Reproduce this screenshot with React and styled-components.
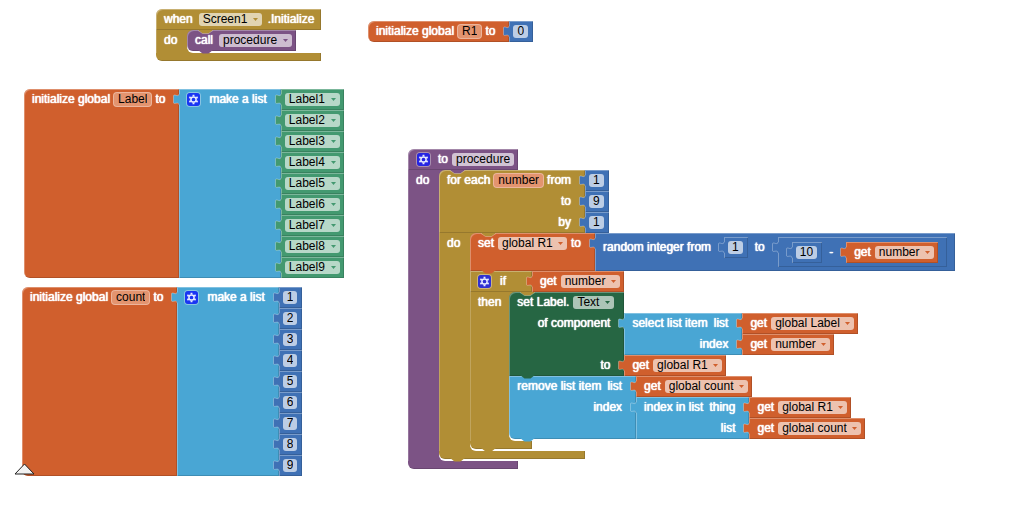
import React from 'react'
import styled, { createGlobalStyle } from 'styled-components'

const colors = {
  variable: '#d05f2d',
  list: '#49a6d4',
  math: '#3f71b5',
  component: '#439970',
  setter: '#266643',
  procedure: '#7c5385',
  control: '#b18e35',
}

const GlobalStyle = createGlobalStyle`
  body {
    margin: 0;
    background: white;
    font-family: 'Liberation Sans', Arial, sans-serif;
    font-size: 12px;
  }
`

const Workspace = styled.main`
  position: relative;
  min-height: 100vh;
  overflow: hidden;
`

const Placed = styled.div`
  position: absolute;
  left: ${props => props.$x}px;
  top: ${props => props.$y}px;
`

const Grid = styled.div`
  position: relative;
  display: grid;
  grid-template-columns: auto auto;
  justify-content: start;
  justify-items: start;
`

const Body = styled.div`
  grid-column: 1;
  grid-row: 1 / span ${props => props.$rows};
  justify-self: stretch;
  background: ${props => props.$color};
  border-radius: ${props => props.$radius || '0'};
  box-shadow: inset 1px 1px 0 rgba(255, 255, 255, .3), inset -1px -1px 0 rgba(0, 0, 0, .15);
`

const Fields = styled.div`
  grid-column: 1;
  grid-row: ${props => props.$row};
  justify-self: ${props => props.$row === 1 ? 'start' : 'end'};
  display: flex;
  align-items: flex-start;
  min-height: 21px;
  gap: ${props => props.$gap}px;
  padding: ${props => props.$top}px ${props => props.$end}px ${props => props.$bottom}px ${props => props.$start}px;
`

const Value = styled.div`
  grid-column: 2;
  grid-row: ${props => props.$row};
`

const Inline = styled.div`
  margin-left: ${props => props.$space}px;
  outline: 1px solid rgba(255, 255, 255, .25);
  outline-offset: -1px;
`

const Text = styled.span`
  line-height: 21px;
  color: white;
  text-shadow: 0 0 1px white, 0 0 1px white;
  white-space: nowrap;
`

const Chip = styled.label`
  display: flex;
  align-items: center;
  gap: 5px;
  height: 13px;
  margin-top: 4px;
  padding: 0 4px;
  border-radius: 3px;
  background: rgba(255, 255, 255, .62);
`

const Select = styled.select`
  appearance: none;
  height: 13px;
  margin: 0;
  padding: 0;
  border: 0;
  background: transparent;
  color: black;
  font: inherit;
  line-height: 13px;
`

const Input = styled.input`
  field-sizing: content;
  box-sizing: border-box;
  height: 13px;
  margin: 4px 0 0;
  padding: 0 4px;
  border: 0;
  border-radius: 3px;
  background: ${props => props.$name ? '#e3946f' : 'rgba(255, 255, 255, .65)'};
  box-shadow: ${props => props.$name ? '0 0 0 1px #ecb59c' : 'none'};
  color: black;
  font: inherit;
  line-height: 13px;
`

const GearButton = styled.button`
  display: flex;
  width: 13px;
  height: 13px;
  margin: 4px 4px 0 0;
  padding: 0;
  border: 0;
  border-radius: 3px;
  background: rgba(15, 25, 250, .8);
  box-shadow: 0 0 0 1px rgba(255, 255, 255, .35);
`

const TabShape = styled.svg`
  position: absolute;
  z-index: 1;
  left: -6px;
  top: 5px;
`

const NotchShape = styled.svg`
  position: absolute;
  z-index: 2;
  left: 11px;
  ${props => props.$bottom ? 'bottom: -3px;' : 'top: 0;'}
`

const Statement = styled.div`
  position: relative;
`

const Arm = styled.div`
  box-sizing: border-box;
  min-width: 31px;
  padding: 0 8px;
  background: ${props => props.$color};
  box-shadow: inset 1px 0 0 rgba(255, 255, 255, .2);
`

const SlotEdge = styled.div`
  background: linear-gradient(${props => props.$color}, ${props => props.$color}) 0 0 / 8px 100% no-repeat;
`

const Slot = styled.div`
  position: relative;
  padding-bottom: 2px;
  background: linear-gradient(${props => props.$color}, ${props => props.$color}) 0 0 / 8px 8px no-repeat white;
  border-radius: 0 0 0 6px;
`

// the mouth takes no part in sizing the head column
const Mouth = styled.div`
  grid-column: 1;
  grid-row: ${props => props.$row};
  display: flex;
  width: 0;

  > * {
    flex: none;
  }
`

// keeps the lower bar as wide as the block's own head
const Foot = styled.div`
  grid-column: 1;
  grid-row: ${props => props.$row};
  justify-self: stretch;
  height: 8px;
  background: ${props => props.$color};
  border-radius: 0 0 0 6px;
  box-shadow: inset -1px -1px 0 rgba(0, 0, 0, .15);
`

const Gear = () => (
  <GearButton type="button" aria-label="Edit block">
    <svg width="13" height="13" viewBox="0 0 13 13" fill="none" stroke="#e4e9ff">
      <circle cx="6.5" cy="6.5" r="2.6" strokeWidth="1.5" />
      <path
        d="M6.5 1.7v1.8M6.5 9.5v1.8M2.3 4.1l1.6.9M9.1 8l1.6.9M2.3 8.9l1.6-.9M9.1 5l1.6-.9"
        strokeWidth="1.9"
      />
    </svg>
  </GearButton>
)

const Tab = ({ color }) => (
  <TabShape width="7" height="12" viewBox="0 0 7 12">
    <path d="M7 0H6C6 4 .5 -1 .5 2V8.500C.5 11 6 7 6 11H7Z" fill={color} />
    <path
      d="M6 0C6 4 .5 -1 .5 2V8.500C.5 11 6 7 6 11"
      fill="none"
      stroke="white"
      strokeOpacity=".3"
    />
  </TabShape>
)

const Notch = ({ color, bottom }) => (
  <NotchShape $bottom={bottom} width="15" height="4" viewBox="0 0 15 4">
    <path d="M0 0H15L10.500 3.500H4.500Z" fill={color} />
    {!bottom && <path d="M0 .5L4.500 3.500H10.500L15 .5" fill="none" stroke="white" strokeOpacity=".3" />}
  </NotchShape>
)

const Dropdown = ({ value, color }) => (
  <Chip>
    <Select aria-label={value} defaultValue={value}>
      <option>{value}</option>
    </Select>
    <svg width="5" height="3" viewBox="0 0 5 3"><path d="M0 0h5L2.500 3z" fill={color} /></svg>
  </Chip>
)

const Name = ({ value }) => <Input $name aria-label="Name" defaultValue={value} />

const Rows = ({ rows }) => rows.map((row, i) => (
  <React.Fragment key={i}>
    <Fields
      $row={i + 1}
      $gap={row.gap || 4}
      $start={row.start || 8}
      $end={row.end || 14}
      $top={row.top || 0}
      $bottom={row.bottom || 0}
    >
      {row.fields}
    </Fields>
    {row.value && <Value $row={i + 1}>{row.value}</Value>}
  </React.Fragment>
))

const Block = ({ color, rows, tab, radius }) => (
  <Grid>
    <Body $color={color} $rows={rows.length} $radius={radius} />
    <Rows rows={rows} />
    {tab && <Tab color={color} />}
  </Grid>
)

const Container = ({ color, rows, label, outer, square, children }) => (
  <Grid>
    <Body $color={color} $rows={rows.length} $radius={square ? '0' : '6px 0 0 0'} />
    <Rows rows={rows} />
    <Mouth $row={rows.length + 1}>
      <Arm $color={color}><Text>{label}</Text></Arm>
      <SlotEdge $color={color}>
        <Slot $color={color}>
          {React.Children.map(children, child => <Statement>{child}</Statement>)}
          <Notch color={color} />
        </Slot>
      </SlotEdge>
    </Mouth>
    <Foot $row={rows.length + 2} $color={color} />
    {!outer && <Notch bottom color={color} />}
  </Grid>
)

const Num = ({ value }) => (
  <Block
    tab
    color={colors.math}
    rows={[{ start: 4, end: 5, fields: <Input aria-label="Number" defaultValue={value} /> }]}
  />
)

const Get = ({ name }) => (
  <Block
    tab
    color={colors.variable}
    rows={[{
      end: 4,
      fields: <><Text>get</Text><Dropdown value={name} color={colors.variable} /></>,
    }]}
  />
)

const ComponentRef = ({ name }) => (
  <Block
    tab
    color={colors.component}
    rows={[{ start: 4, end: 4, fields: <Dropdown value={name} color={colors.component} /> }]}
  />
)

const MakeList = ({ items }) => (
  <Block
    tab
    color={colors.list}
    rows={items.map((item, i) => ({
      gap: 5,
      fields: i === 0 && <><Gear /><Text>make a list</Text></>,
      value: item,
    }))}
  />
)

const Global = ({ name, value }) => (
  <Block
    color={colors.variable}
    radius="6px 0 0 6px"
    rows={[{
      fields: <><Text>initialize global</Text><Name value={name} /><Text>to</Text></>,
      value,
    }]}
  />
)

const Screen = () => (
  <Container
    outer
    color={colors.control}
    label="do"
    rows={[{
      gap: 6,
      end: 7,
      fields: <><Text>when</Text><Dropdown value="Screen1" color={colors.control} /><Text>.Initialize</Text></>,
    }]}
  >
    <>
      <Block
        color={colors.procedure}
        radius="6px 0 0 6px"
        rows={[{
          gap: 6,
          end: 4,
          fields: <><Text>call</Text><Dropdown value="procedure" color={colors.procedure} /></>,
        }]}
      />
      <Notch bottom color={colors.procedure} />
    </>
  </Container>
)

const RandomInteger = () => (
  <Block
    tab
    color={colors.math}
    rows={[{
      top: 4,
      bottom: 4,
      end: 8,
      gap: 7,
      fields: <>
        <Text>random integer from</Text>
        <Inline $space={6}><Num value="1" /></Inline>
        <Text>to</Text>
        <Inline $space={6}>
          <Block
            tab
            color={colors.math}
            rows={[{
              start: 14,
              end: 9,
              top: 5,
              bottom: 4,
              gap: 7,
              fields: <>
                <Inline $space={0}><Num value="10" /></Inline>
                <Text>-</Text>
                <Inline $space={6}><Get name="number" /></Inline>
              </>,
            }]}
          />
        </Inline>
      </>,
    }]}
  />
)

const SetRandom = () => (
  <>
    <Block
      color={colors.variable}
      radius="6px 0 0 0"
      rows={[{
        fields: <><Text>set</Text><Dropdown value="global R1" color={colors.variable} /><Text>to</Text></>,
        value: <RandomInteger />,
      }]}
    />
    <Notch bottom color={colors.variable} />
  </>
)

const SetText = () => (
  <>
    <Block
      color={colors.setter}
      radius="6px 0 0 0"
      rows={[
        {
          end: 10,
          fields: <><Text>set Label.</Text><Dropdown value="Text" color={colors.setter} /></>,
        },
        {
          fields: <Text>of component</Text>,
          value: (
            <Block
              tab
              color={colors.list}
              rows={[
                { gap: 6, fields: <><Text>select list item</Text><Text>list</Text></>, value: <Get name="global Label" /> },
                { fields: <Text>index</Text>, value: <Get name="number" /> },
              ]}
            />
          ),
        },
        { fields: <Text>to</Text>, value: <Get name="global R1" /> },
      ]}
    />
    <Notch bottom color={colors.setter} />
  </>
)

const RemoveItem = () => (
  <>
    <Block
      color={colors.list}
      radius="0 0 0 6px"
      rows={[
        { gap: 6, fields: <><Text>remove list item</Text><Text>list</Text></>, value: <Get name="global count" /> },
        {
          fields: <Text>index</Text>,
          value: (
            <Block
              tab
              color={colors.list}
              rows={[
                { gap: 6, fields: <><Text>index in list</Text><Text>thing</Text></>, value: <Get name="global R1" /> },
                { fields: <Text>list</Text>, value: <Get name="global count" /> },
              ]}
            />
          ),
        },
      ]}
    />
    <Notch bottom color={colors.list} />
  </>
)

const Procedure = () => (
  <Container
    outer
    color={colors.procedure}
    label="do"
    rows={[{
      start: 9,
      end: 4,
      fields: <><Gear /><Text>to</Text><Input aria-label="Procedure name" defaultValue="procedure" /></>,
    }]}
  >
    <Container
      color={colors.control}
      label="do"
      rows={[
        {
          fields: <><Text>for each</Text><Name value="number" /><Text>from</Text></>,
          value: <Num value="1" />,
        },
        { fields: <Text>to</Text>, value: <Num value="9" /> },
        { fields: <Text>by</Text>, value: <Num value="1" /> },
      ]}
    >
      <SetRandom />
      <Container
        square
        color={colors.control}
        label="then"
        rows={[{
          gap: 5,
          end: 26,
          fields: <><Gear /><Text>if</Text></>,
          value: <Get name="number" />,
        }]}
      >
        <SetText />
        <RemoveItem />
      </Container>
    </Container>
  </Container>
)

const numbers = [1, 2, 3, 4, 5, 6, 7, 8, 9]

const App = () => (
  <Workspace>
    <GlobalStyle />
    <Placed $x={156} $y={9}><Screen /></Placed>
    <Placed $x={368} $y={21}><Global name="R1" value={<Num value="0" />} /></Placed>
    <Placed $x={24} $y={89}>
      <Global name="Label" value={<MakeList items={numbers.map(n => <ComponentRef key={n} name={`Label${n}`} />)} />} />
    </Placed>
    <Placed $x={22} $y={287}>
      <Global name="count" value={<MakeList items={numbers.map(n => <Num key={n} value={n} />)} />} />
    </Placed>
    <Placed $x={408} $y={149}><Procedure /></Placed>
    <Placed $x={14} $y={463}>
      <svg width="21" height="12" viewBox="0 0 21 12">
        <path d="M10.500 1L20 11H1Z" fill="#f2f2f2" stroke="#222" />
      </svg>
    </Placed>
  </Workspace>
)

export default App
